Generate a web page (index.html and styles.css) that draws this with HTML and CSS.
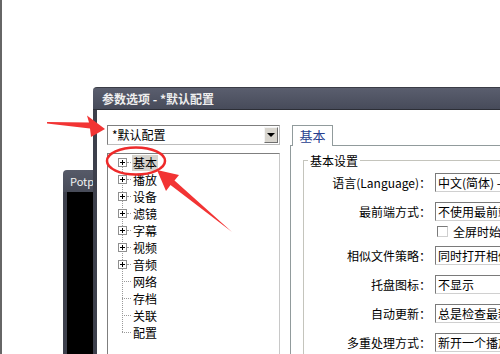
FILE: index.html
```html
<!DOCTYPE html>
<html lang="zh-CN">
<head>
    <meta charset="UTF-8">
    <title>参数选项 - *默认配置</title>
    <link rel="stylesheet" href="styles.css">
</head>
<body>
    <div class="desktop">
        <div class="win player">
            <div class="player-title">Potplayer</div>
            <div class="player-video"></div>
        </div>

        <div class="win dialog">
            <div class="dlg-title">参数选项 - *默认配置</div>
            <div class="dlg-body">
                <div class="nav">
                    <div class="combo">
                        <span class="combo-text">*默认配置</span>
                        <span class="combo-btn"></span>
                    </div>
                    <ul class="tree">
                        <li><span class="twig"><i class="plus"></i></span><span class="label sel">基本</span></li>
                        <li><span class="twig"><i class="plus"></i></span><span class="label">播放</span></li>
                        <li><span class="twig"><i class="plus"></i></span><span class="label">设备</span></li>
                        <li><span class="twig"><i class="plus"></i></span><span class="label">滤镜</span></li>
                        <li><span class="twig"><i class="plus"></i></span><span class="label">字幕</span></li>
                        <li><span class="twig"><i class="plus"></i></span><span class="label">视频</span></li>
                        <li><span class="twig"><i class="plus"></i></span><span class="label">音频</span></li>
                        <li><span class="twig leaf"></span><span class="label">网络</span></li>
                        <li><span class="twig leaf"></span><span class="label">存档</span></li>
                        <li><span class="twig leaf"></span><span class="label">关联</span></li>
                        <li><span class="twig leaf"></span><span class="label">配置</span></li>
                    </ul>
                </div>

                <div class="pane">
                    <div class="tabs"><span class="tab">基本</span></div>
                    <div class="tab-page">
                        <fieldset class="group">
                            <legend>基本设置</legend>
                            <div class="row">
                                <label>语言(Language)：</label>
                                <span class="field">中文(简体) - Chinese</span>
                            </div>
                            <div class="row">
                                <label>最前端方式：</label>
                                <span class="field">不使用最前端方式</span>
                            </div>
                            <div class="row check">
                                <label></label>
                                <span class="checkline"><i class="box"></i>全屏时始终置于最前端</span>
                            </div>
                            <div class="row">
                                <label>相似文件策略：</label>
                                <span class="field">同时打开相似的文件</span>
                            </div>
                            <div class="row">
                                <label>托盘图标：</label>
                                <span class="field">不显示</span>
                            </div>
                            <div class="row">
                                <label>自动更新：</label>
                                <span class="field">总是检查最新版本</span>
                            </div>
                            <div class="row">
                                <label>多重处理方式：</label>
                                <span class="field">新开一个播放器</span>
                            </div>
                        </fieldset>
                    </div>
                </div>
            </div>
        </div>

        <!-- red marks drawn over the screenshot -->
        <svg class="marks" width="500" height="354" viewBox="0 0 500 354">
            <polygon points="47,122 89,122.5 87,115.5 105,129 91,137 90,128.5 47,123.5" fill="#f23434"/>
            <ellipse cx="136" cy="161" rx="29" ry="13.5" fill="none" stroke="#ee2a2a" stroke-width="2.5"/>
            <polygon points="157,170 179,175 174.5,180.5 232,232 170.5,185 166,191" fill="#f23434"/>
        </svg>
    </div>
</body>
</html>
```

FILE: styles.css
```css
:root{
    --frame:#3d404c;
    --title-top:#5a5e6e;
    --title-bottom:#474b5a;
    --red:#f23434;
}
*,*::before,*::after{
    margin: 0;
    padding: 0;
    box-sizing: border-box;
}
body{
    width: 500px;
    height: 354px;
    overflow: hidden;
    background: #fff;
    font-family: "Noto Sans CJK SC", "Liberation Sans", sans-serif;
    font-size: 12px;
    color: #000;
}
.desktop{
    position: relative;
    width: 500px;
    height: 354px;
    overflow: hidden;
    border-left: 2px solid #666;
}
.win{
    position: absolute;
}

/* the player window behind the dialog */
.player{
    left: 61px;
    top: 170px;
    width: 60px;
    height: 200px;
    display: flex;
    flex-direction: column;
}
.player-title{
    height: 22px;
    padding-left: 7px;
    line-height: 23px;
    font-size: 11px;
    color: #f2f2f2;
    background: linear-gradient(#565a68, #474b58);
    border-radius: 4px 0 0 0;
}
.player-video{
    flex: 1;
    background: #000;
    border-left: 4px solid var(--frame);
}

/* preferences dialog */
.dialog{
    left: 91px;
    top: 87px;
    width: 440px;
    height: 290px;
    display: flex;
    flex-direction: column;
}
.dlg-title{
    height: 23px;
    padding-left: 9px;
    line-height: 21px;
    font-weight: bold;
    color: #eeeeee;
    background: linear-gradient(var(--title-top), var(--title-bottom));
    border-top: 1px solid #3a3c46;
    border-bottom: 1px solid #2c2e36;
    border-radius: 4px 0 0 0;
}
.dlg-body{
    flex: 1;
    display: flex;
    gap: 10px;
    padding: 15px 0 0 10px;
    background: #fff;
    border-left: 4px solid var(--frame);
}
.nav{
    width: 173px;
    flex-shrink: 0;
    display: flex;
    flex-direction: column;
    gap: 8px;
}
.combo{
    height: 20px;
    display: flex;
    align-items: center;
    border: 1px solid #7f7f7f;
    border-right-color: #bdbdbd;
    border-bottom-color: #bdbdbd;
    background: #fff;
}
.combo-text{
    flex: 1;
    padding-left: 4px;
    line-height: 18px;
    white-space: nowrap;
}
.combo-btn{
    width: 14px;
    height: 16px;
    margin-right: 1px;
    background: #d8d5ce;
    border: 1px solid #f4f4f4;
    border-right-color: #6f6f6f;
    border-bottom-color: #6f6f6f;
    display: flex;
    align-items: center;
    justify-content: center;
}
.combo-btn::after{
    content: "";
    border-left: 4px solid transparent;
    border-right: 4px solid transparent;
    border-top: 4px solid #000;
}

.tree{
    position: relative;
    flex: 1;
    list-style: none;
    border: 1px solid #7f7f7f;
    border-right-color: #c8c8c8;
    padding-left: 10px;
}
.tree::before{
    content: "";
    position: absolute;
    left: 14px;
    top: 8px;
    height: 170px;
    border-left: 1px dotted #9a9a9a;
}
.tree li{
    height: 17px;
    display: flex;
    align-items: center;
}
.twig{
    width: 13px;
    height: 9px;
    display: flex;
    align-items: center;
}
.twig::after{
    content: "";
    flex: 1;
    border-top: 1px dotted #9a9a9a;
}
.twig.leaf{
    padding-left: 4px;
}
.plus{
    position: relative;
    width: 9px;
    height: 9px;
    background: #fff;
    border: 1px solid #8f8f8f;
}
.plus::before{
    content: "";
    position: absolute;
    left: 1px;
    top: 3px;
    width: 5px;
    height: 1px;
    background: #000;
}
.plus::after{
    content: "";
    position: absolute;
    left: 3px;
    top: 1px;
    width: 1px;
    height: 5px;
    background: #000;
}
.label{
    padding: 0 1px;
    margin-left: 1px;
    line-height: 16px;
}
.label.sel{
    background: #d6d3cc;
}

/* right side: tab and settings */
.pane{
    flex: 1;
    min-width: 0;
    display: flex;
    flex-direction: column;
}
.tabs{
    display: flex;
    padding-left: 2px;
}
.tab{
    width: 41px;
    height: 21px;
    text-align: center;
    line-height: 20px;
    font-size: 13px;
    color: #27408f;
    background: #fff;
    border: 1px solid #919b9c;
    border-bottom: none;
    position: relative;
    z-index: 1;
}
.tab-page{
    flex: 1;
    margin-top: -1px;
    border: 1px solid #919b9c;
    padding: 6px 0 0 12px;
}
.group{
    border: 1px solid #c4c4bc;
    padding: 4px 0 0 0;
    height: 230px;
    min-width: 0;
}
.group legend{
    margin-left: 4px;
    padding: 0 2px;
    line-height: 17px;
}
.row{
    display: flex;
    align-items: center;
    height: 19px;
    margin-bottom: 10px;
}
.row label{
    width: 127px;
    text-align: right;
    white-space: nowrap;
    flex-shrink: 0;
}
.field{
    margin-left: 4px;
    width: 160px;
    flex-shrink: 0;
    height: 19px;
    line-height: 17px;
    padding-left: 2px;
    white-space: nowrap;
    overflow: hidden;
    background: #fff;
    border: 1px solid #7a7a7a;
    border-right-color: #d0d0d0;
    border-bottom-color: #d0d0d0;
}
.row.check{
    height: 13px;
    margin: -6px 0 8px;
}
.checkline{
    margin-left: 6px;
    display: flex;
    align-items: center;
    gap: 5px;
    white-space: nowrap;
}
.box{
    width: 11px;
    height: 11px;
    background: #fff;
    border: 1px solid #7a7a7a;
    border-right-color: #cfcfcf;
    border-bottom-color: #cfcfcf;
}

.marks{
    position: absolute;
    left: -2px;
    top: 0;
    pointer-events: none;
}
```
